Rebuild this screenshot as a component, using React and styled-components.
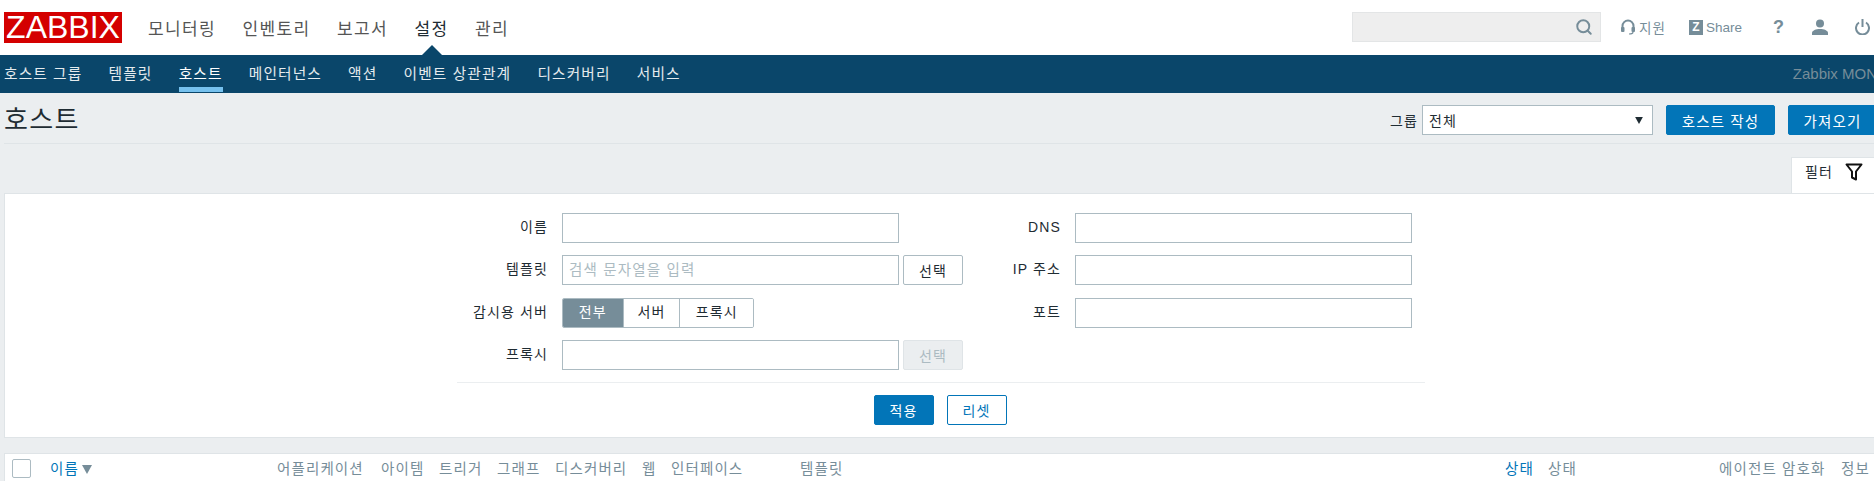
import React from 'react';
import styled, { createGlobalStyle } from 'styled-components';
import { Search } from 'lucide-react';

const FONT = '"Liberation Sans", "Noto Sans CJK KR", sans-serif';

const GlobalStyle = createGlobalStyle`
  html, body { margin: 0; padding: 0; background: #ebeef0; }
  body { font-family: ${FONT}; overflow: hidden; }
  * { box-sizing: border-box; }
`;

const Page = styled.div`
  width: 1874px;
  height: 481px;
  overflow: hidden;
  background: #ebeef0;
  color: #1f2c33;
  font-size: 14px;
  letter-spacing: 0.08em;
`;

// Top bar
const TopBar = styled.header`
  height: 55px;
  background: #fff;
  display: flex;
  align-items: flex-start;
  padding: 12px 4px 0 4px;
`;
const Logo = styled.div`
  width: 118px;
  height: 31px;
  background: #d40000;
  color: #fff;
  font-size: 32px;
  line-height: 31px;
  letter-spacing: 0;
  text-align: center;
`;
const MainMenu = styled.nav`
  display: flex;
  gap: 26.5px;
  margin-left: 26px;
  height: 31px;
  align-items: center;
`;
const MainItem = styled.a`
  position: relative;
  font-size: 17px;
  letter-spacing: 0.08em;
  color: ${(props) => (props.$active ? '#1f2c33' : '#555')};
  white-space: nowrap;
  ${(props) => props.$active && `
    &::after {
      content: '';
      position: absolute;
      left: 50%;
      margin-left: -10px;
      top: 30px;
      border-left: 10px solid transparent;
      border-right: 10px solid transparent;
      border-bottom: 10px solid #0a466a;
    }
  `}
`;
const TopRight = styled.div`
  margin-left: auto;
  display: flex;
  align-items: center;
  height: 30px;
  color: #768d99;
`;
const SearchBox = styled.div`
  width: 249px;
  height: 30px;
  background: #eee;
  border: 1px solid #e3e5e6;
  display: flex;
  align-items: center;
  justify-content: flex-end;
  padding-right: 7px;
  margin-right: 20px;
  color: #768d99;
`;
const TopLink = styled.a`
  display: flex;
  align-items: center;
  gap: ${(props) => props.$gap || 4}px;
  font-size: 13.5px;
  letter-spacing: ${(props) => (props.$latin ? '0' : '0.08em')};
  color: #768d99;
  margin-right: ${(props) => props.$mr || 0}px;
`;
const ZIcon = styled.span`
  width: 14px;
  height: 15px;
  background: #768d99;
  color: #fff;
  font-size: 12px;
  font-weight: bold;
  line-height: 15px;
  letter-spacing: 0;
  text-align: center;
`;
const HelpMark = styled.span`
  width: 10px;
  font-size: 18px;
  font-weight: bold;
  letter-spacing: 0;
  color: #768d99;
  margin-right: 29px;
`;
const UserIcon = styled.svg`
  margin-right: 27px;
`;

// Sub navigation
const SubBar = styled.nav`
  height: 38px;
  background: #0a466a;
  display: flex;
  padding-left: 4px;
  gap: 26.2px;
`;
const SubItem = styled.a`
  height: 37px;
  padding-top: 9px;
  font-size: 14.7px;
  line-height: 20px;
  white-space: nowrap;
  color: ${(props) => (props.$active ? '#fff' : '#e5ebee')};
  border-bottom: 5px solid ${(props) => (props.$active ? '#76c1ee' : 'transparent')};
`;
const ServerName = styled.span`
  margin-left: auto;
  font-size: 15px;
  line-height: 38px;
  letter-spacing: 0;
  color: #768d99;
  white-space: nowrap;
  margin-right: -3px;
`;

// Title row
const TitleRow = styled.div`
  height: 51px;
  margin-left: 4px;
  border-bottom: 1px solid #dfe4e7;
  display: flex;
  align-items: flex-start;
  padding-top: 12px;
`;
const Title = styled.h1`
  margin: 0;
  font-size: 26px;
  font-weight: normal;
  line-height: 30px;
  letter-spacing: 0.05em;
  color: #1f2c33;
`;
const Controls = styled.div`
  margin-left: auto;
  display: flex;
  align-items: center;
  margin-right: -3px;
`;
const ControlLabel = styled.span`
  font-size: 14px;
  margin-right: 4px;
`;
const GroupSelect = styled.div`
  width: 231px;
  height: 30px;
  background: #fff;
  border: 1px solid #acbbc2;
  display: flex;
  align-items: center;
  justify-content: space-between;
  padding: 0 9px 0 6px;
  font-size: 14px;
  margin-right: 13px;
`;
const PrimaryButton = styled.button`
  height: 30px;
  width: ${(props) => props.$width}px;
  margin-right: ${(props) => props.$mr || 0}px;
  background: #0275b8;
  border: 1px solid #0275b8;
  border-radius: 2px;
  color: #fff;
  font-family: ${FONT};
  font-size: 14.5px;
  letter-spacing: 0.08em;
  padding: 0;
  white-space: nowrap;
`;

// Filter
const TabRow = styled.div`
  display: flex;
  justify-content: flex-end;
  margin-top: 13px;
`;
const FilterTab = styled.div`
  width: 83px;
  height: 36px;
  background: #fff;
  border: 1px solid #dfe4e7;
  border-bottom: 0;
  border-right: 0;
  display: flex;
  align-items: flex-start;
  padding: 5px 0 0 13px;
  font-size: 14px;
  line-height: 18px;
  gap: 12px;
`;
const FilterPanel = styled.section`
  margin-left: 4px;
  height: 245px;
  background: #fff;
  border: 1px solid #dfe4e7;
  border-right: 0;
  padding: 19px 0 0 3px;
`;
const FilterForm = styled.div`
  width: 968px;
  margin: 0 auto;
`;
const FormGrid = styled.div`
  display: grid;
  grid-template-columns: 91px 401px 84px 337px;
  grid-auto-rows: 30px;
  column-gap: 14px;
  row-gap: 12.33px;
  padding-bottom: 12px;
  border-bottom: 1px solid #ebeef0;
`;
const FieldLabel = styled.label`
  text-align: right;
  font-size: 14px;
  line-height: 28px;
  white-space: nowrap;
`;
const FieldRow = styled.div`
  display: flex;
  gap: 4px;
`;
const TextInput = styled.input`
  width: ${(props) => props.$width}px;
  height: 30px;
  border: 1px solid #acbbc2;
  background: #fff;
  padding: 0 6px;
  outline: none;
  font-family: ${FONT};
  font-size: 14.5px;
  letter-spacing: 0.08em;
  &::placeholder { color: #acbbc2; opacity: 1; }
`;
const PickButton = styled.button`
  width: 60px;
  height: 30px;
  border: 1px solid ${(props) => (props.disabled ? '#dfe4e7' : '#acbbc2')};
  border-radius: 2px;
  background: ${(props) => (props.disabled ? '#ebeef0' : '#fff')};
  color: ${(props) => (props.disabled ? '#acbbc2' : '#1f2c33')};
  font-family: ${FONT};
  font-size: 14px;
  letter-spacing: 0.08em;
  padding: 0;
`;
const Segments = styled.div`
  display: flex;
  height: 30px;
  width: 192px;
  border: 1px solid #acbbc2;
  border-radius: 2px;
  overflow: hidden;
`;
const Segment = styled.div`
  width: ${(props) => props.$width}px;
  background: ${(props) => (props.$active ? '#768d99' : '#fff')};
  color: ${(props) => (props.$active ? '#fff' : '#1f2c33')};
  border-left: ${(props) => (props.$first ? '0' : '1px solid #acbbc2')};
  text-align: center;
  font-size: 14px;
  line-height: 27px;
`;
const ActionRow = styled.div`
  display: flex;
  justify-content: center;
  gap: 13px;
  margin-top: 12px;
  padding-right: 2px;
`;
const ApplyButton = styled(PrimaryButton)`
  font-size: 14px;
`;
const ResetButton = styled.button`
  width: 60px;
  height: 30px;
  background: #fff;
  border: 1px solid #0275b8;
  border-radius: 2px;
  color: #0275b8;
  font-family: ${FONT};
  font-size: 14px;
  letter-spacing: 0.08em;
  padding: 0;
`;

// Host table head
const TableHead = styled.div`
  margin: 15px 0 0 4px;
  height: 40px;
  background: #fff;
  border: 1px solid #dfe4e7;
  border-right: 0;
  display: grid;
  grid-template-columns: 38px 227px 104px 58px 58px 58px 87px 29px 129px 705px 43px 171px 122px auto;
  align-items: start;
  padding: 5px 0 0 7px;
  font-size: 14.5px;
  line-height: 20px;
  color: #768d99;
  white-space: nowrap;
`;
const CheckBox = styled.span`
  display: block;
  width: 19px;
  height: 19px;
  background: #fff;
  border: 1px solid #acbbc2;
  border-radius: 2px;
`;
const SortLink = styled.span`
  display: flex;
  align-items: center;
  gap: 3px;
  color: #0275b8;
`;
const HeadLink = styled.span`
  color: #0275b8;
`;

const subItems = ['호스트 그룹', '템플릿', '호스트', '메인터넌스', '액션', '이벤트 상관관계', '디스커버리', '서비스'];
const mainItems = ['모니터링', '인벤토리', '보고서', '설정', '관리'];

const Arrow = ({ color, size = 10 }) => (
  <svg width={size} height={size - 1} viewBox="0 0 10 9"><path d="M0 0h10L5 9z" fill={color} /></svg>
);

const App = () => {
  return (
    <Page>
      <GlobalStyle />
      <TopBar>
        <Logo>ZABBIX</Logo>
        <MainMenu>
          {mainItems.map((item) => (
            <MainItem key={item} $active={item === '설정'}>{item}</MainItem>
          ))}
        </MainMenu>
        <TopRight>
          <SearchBox><Search size={18} strokeWidth={2.6} /></SearchBox>
          <TopLink $mr={23}>
            <svg width="14" height="16" viewBox="0 0 14 16" fill="none" stroke="#768d99">
              <path d="M1.5 10V7a5.5 5.5 0 0 1 11 0v3" strokeWidth="2" />
              <rect x="0" y="8" width="3.5" height="5" rx="1" fill="#768d99" stroke="none" />
              <rect x="10.5" y="8" width="3.5" height="5" rx="1" fill="#768d99" stroke="none" />
              <path d="M12 13c0 1.5-2 2-4 2" strokeWidth="1.2" />
            </svg>
            지원
          </TopLink>
          <TopLink $latin $mr={31} $gap={3}>
            <ZIcon>Z</ZIcon>
            Share
          </TopLink>
          <HelpMark>?</HelpMark>
          <UserIcon width="16" height="16" viewBox="0 0 16 16" fill="#768d99">
            <circle cx="8" cy="4.5" r="4" />
            <path d="M0 16v-2c0-2.500 4-4 8-4s8 1.500 8 4v2z" />
          </UserIcon>
          <svg width="15" height="16" viewBox="0 0 15 16" fill="none" stroke="#768d99" strokeWidth="2">
            <path d="M4 3.500a6.500 6.500 0 1 0 7 0" />
            <path d="M7.500 0v8" />
          </svg>
        </TopRight>
      </TopBar>

      <SubBar>
        {subItems.map((item) => (
          <SubItem key={item} $active={item === '호스트'}>{item}</SubItem>
        ))}
        <ServerName>Zabbix MON</ServerName>
      </SubBar>

      <TitleRow>
        <Title>호스트</Title>
        <Controls>
          <ControlLabel>그룹</ControlLabel>
          <GroupSelect>전체<Arrow color="#1f2c33" size={8} /></GroupSelect>
          <PrimaryButton $width={109} $mr={13}>호스트 작성</PrimaryButton>
          <PrimaryButton $width={89}>가져오기</PrimaryButton>
        </Controls>
      </TitleRow>

      <TabRow>
        <FilterTab>
          필터
          <svg width="18" height="18" viewBox="0 0 18 18" fill="none" stroke="#111" strokeWidth="2" strokeLinejoin="round">
            <path d="M1.500 1.500h15l-5.500 7v8l-4-2v-6z" />
          </svg>
        </FilterTab>
      </TabRow>
      <FilterPanel>
        <FilterForm>
          <FormGrid>
            <FieldLabel>이름</FieldLabel>
            <FieldRow><TextInput $width={337} /></FieldRow>
            <FieldLabel>DNS</FieldLabel>
            <TextInput $width={337} />

            <FieldLabel>템플릿</FieldLabel>
            <FieldRow>
              <TextInput $width={337} placeholder="검색 문자열을 입력" />
              <PickButton>선택</PickButton>
            </FieldRow>
            <FieldLabel>IP 주소</FieldLabel>
            <TextInput $width={337} />

            <FieldLabel>감시용 서버</FieldLabel>
            <Segments>
              <Segment $first $active $width={60}>전부</Segment>
              <Segment $width={57}>서버</Segment>
              <Segment $width={74}>프록시</Segment>
            </Segments>
            <FieldLabel>포트</FieldLabel>
            <TextInput $width={337} />

            <FieldLabel>프록시</FieldLabel>
            <FieldRow>
              <TextInput $width={337} />
              <PickButton disabled>선택</PickButton>
            </FieldRow>
          </FormGrid>
          <ActionRow>
            <ApplyButton $width={60}>적용</ApplyButton>
            <ResetButton>리셋</ResetButton>
          </ActionRow>
        </FilterForm>
      </FilterPanel>

      <TableHead>
        <CheckBox />
        <SortLink>이름<Arrow color="#768d99" /></SortLink>
        <span>어플리케이션</span>
        <span>아이템</span>
        <span>트리거</span>
        <span>그래프</span>
        <span>디스커버리</span>
        <span>웹</span>
        <span>인터페이스</span>
        <span>템플릿</span>
        <HeadLink>상태</HeadLink>
        <span>상태</span>
        <span>에이전트 암호화</span>
        <span>정보</span>
      </TableHead>
    </Page>
  );
};

export default App;
